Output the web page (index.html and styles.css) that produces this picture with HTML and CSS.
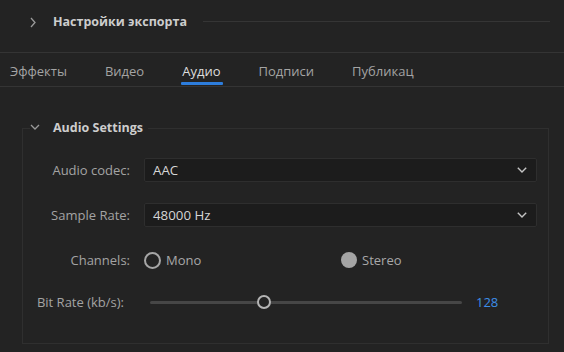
FILE: index.html
```html
<!DOCTYPE html>
<html lang="ru">
<head>
<meta charset="utf-8">
<link rel="stylesheet" href="styles.css">
</head>
<body>
<div class="header">
  <svg class="hdr-chev" width="6" height="11" viewBox="0 0 6 11"><path d="M1 1 L5 5.5 L1 10" fill="none" stroke="#9a9a9a" stroke-width="1.3"/></svg>
  <span class="hdr-title">Настройки экспорта</span>
  <span class="hdr-line"></span>
</div>
<div class="tabs">
  <span class="tab">Эффекты</span>
  <span class="tab">Видео</span>
  <span class="tab active">Аудио</span>
  <span class="tab">Подписи</span>
  <span class="tab">Публикац</span>
</div>
<fieldset class="panel">
  <legend class="panel-title">
    <svg class="sec-chev" width="10" height="6" viewBox="0 0 10 6"><path d="M1 1 L5 5 L9 1" fill="none" stroke="#9a9a9a" stroke-width="1.3"/></svg>
    <span>Audio Settings</span>
  </legend>
  <div class="rows">
    <div class="row">
      <span class="label">Audio codec:</span>
      <div class="select"><span>AAC</span>
        <svg width="10" height="6" viewBox="0 0 10 6"><path d="M0.8 0.8 L5 5 L9.2 0.8" fill="none" stroke="#c4c4c4" stroke-width="1.4"/></svg>
      </div>
    </div>
    <div class="row">
      <span class="label">Sample Rate:</span>
      <div class="select"><span>48000 Hz</span>
        <svg width="10" height="6" viewBox="0 0 10 6"><path d="M0.8 0.8 L5 5 L9.2 0.8" fill="none" stroke="#c4c4c4" stroke-width="1.4"/></svg>
      </div>
    </div>
    <div class="row">
      <span class="label">Channels:</span>
      <div class="radios">
        <span class="radio"><span class="dot"></span>Mono</span>
        <span class="radio checked"><span class="dot"></span>Stereo</span>
      </div>
    </div>
    <div class="row">
      <span class="label label-bit">Bit Rate (kb/s):</span>
      <div class="slider-row">
        <div class="slider">
          <div class="track"></div>
          <div class="thumb" style="left: 114px"></div>
        </div>
        <span class="value">128</span>
      </div>
    </div>
  </div>
</fieldset>
</body>
</html>
```
FILE: styles.css
```css
* { box-sizing: border-box; }
html, body { margin: 0; padding: 0; }
body {
  width: 564px;
  height: 352px;
  overflow: hidden;
  background: #232323;
  font-family: "Open Sans", "Noto Sans", sans-serif;
  font-size: 13px;
  color: #a8a8a8;
}
.header {
  height: 53px;
  border-bottom: 1px solid #343434;
  display: flex;
  align-items: flex-start;
  padding-top: 12px;
}
.hdr-chev { margin: 5px 0 0 30px; }
.hdr-title {
  margin-left: 17px;
  font-weight: 700;
  font-size: 12.5px;
  line-height: 18px;
  margin-top: 1px;
  color: #cdcdcd;
}
.hdr-line {
  flex: 1;
  height: 1px;
  background: #353535;
  margin: 9px 14px 0 16px;
}
.tabs {
  height: 34px;
  border-bottom: 1px solid #343434;
  display: flex;
  gap: 38px;
  padding-left: 10px;
}
.tab {
  position: relative;
  padding-top: 9px;
  line-height: 18px;
  color: #a4a4a4;
}
.tab.active { color: #dedede; }
.tab.active::after {
  content: "";
  position: absolute;
  left: -1px;
  right: -3px;
  top: 29px;
  height: 3px;
  border-radius: 1px;
  background: #2d7ddc;
}
.panel {
  margin: 33px 15px 0 22px;
  padding: 0 11px 29px 0;
  border: 1px solid #2f2f2f;
  min-width: 0;
}
.panel-title {
  margin-left: 7px;
  padding: 0 5px 0 0;
  display: flex;
  align-items: center;
  font-weight: 700;
  font-size: 12.5px;
  line-height: 16px;
  color: #cdcdcd;
}
.sec-chev { margin-right: 13px; margin-top: -2px; }
.rows {
  padding-top: 22px;
  display: flex;
  flex-direction: column;
  gap: 21px;
}
.rows .row:last-child { margin-top: -3px; }
.row {
  display: flex;
  align-items: center;
  height: 24px;
}
.label {
  width: 107px;
  text-align: right;
  flex: none;
  margin-right: 14px;
  white-space: nowrap;
  color: #a3a3a3;
}
.label-bit { width: 101px; margin-right: 20px; }
.select {
  flex: 1;
  height: 24px;
  background: #1c1c1c;
  border: 1px solid #2e2e2e;
  border-radius: 2px;
  display: flex;
  align-items: center;
  justify-content: space-between;
  padding: 0 9px 0 8px;
  color: #d6d6d6;
  font-size: 13.3px;
}
.radios {
  display: flex;
}
.radio {
  display: flex;
  align-items: center;
  width: 197px;
  color: #a8a8a8;
}
.dot {
  width: 17px;
  height: 17px;
  border-radius: 50%;
  border: 2px solid #a6a6a6;
  margin-right: 5px;
  flex: none;
}
.radio.checked .dot {
  width: 16px;
  height: 16px;
  border: none;
  background: #a4a4a4;
  margin-right: 5px;
}
.slider-row {
  display: flex;
  align-items: center;
  padding-left: 6px;
}
.slider {
  position: relative;
  width: 312px;
  height: 14px;
  display: flex;
  align-items: center;
}
.track {
  width: 100%;
  height: 3px;
  background: #464646;
  border-radius: 2px;
}
.thumb {
  position: absolute;
  top: 0;
  width: 14px;
  height: 14px;
  margin-left: -7px;
  border-radius: 50%;
  border: 2px solid #b4b4b4;
  background: #232323;
}
.value {
  margin-left: 14px;
  color: #3d8ee8;
}
```
